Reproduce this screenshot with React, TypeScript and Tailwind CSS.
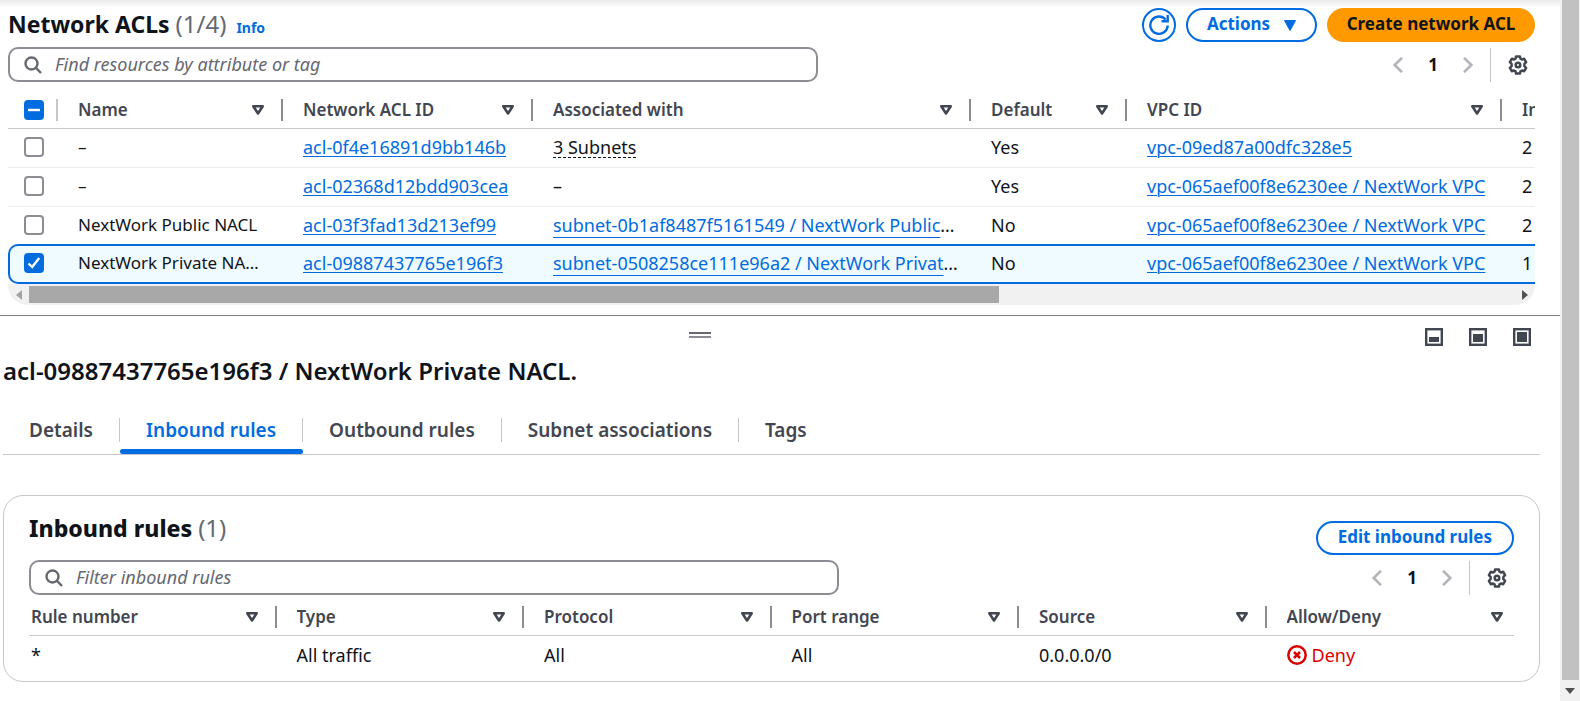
import React, { useState } from "react";

type IconProps = { className?: string };

const SearchIcon = ({ className = "" }: IconProps) => (
  <svg viewBox="0 0 18 18" className={className} fill="none" stroke="currentColor" strokeWidth="2.4" aria-hidden="true">
    <circle cx="7.500" cy="7.500" r="6" />
    <path d="M11.700 11.700 17 17" />
  </svg>
);

const GearIcon = () => (
  <svg viewBox="0 0 20 20" className="size-5" fill="none" stroke="currentColor" strokeWidth="2.5" strokeLinejoin="round" aria-hidden="true">
    <path d="M8.100 1.400h3.800l.6 2.300 1.400.8 2.300-.7 1.900 3.300-1.700 1.700v2.400l1.700 1.700-1.900 3.300-2.300-.7-1.400.8-.6 2.300H8.100l-.6-2.300-1.400-.8-2.300.7-1.900-3.300 1.700-1.700V8.800L1.900 7.100l1.900-3.300 2.300.7 1.400-.8z" />
    <circle cx="10" cy="10" r="2.300" />
  </svg>
);

const RefreshIcon = () => (
  <svg viewBox="0 0 20 20" className="size-5" fill="none" stroke="currentColor" strokeWidth="2.4" aria-hidden="true">
    <path d="M18.700 10.500A8.700 8.700 0 1 1 16.600 4.500" />
    <path d="M18.700 0v6.200H12.500" />
  </svg>
);

const Chevron = ({ flip }: { flip?: boolean }) => (
  <svg viewBox="0 0 10 16" className="h-4 w-[10px] text-[#b4b4bb]" fill="none" stroke="currentColor" strokeWidth="2.600" aria-hidden="true">
    <path d={flip ? "M1 .8 8.300 8 1 15.200" : "M9 .8 1.700 8 9 15.200"} />
  </svg>
);

const SortIcon = () => (
  <svg viewBox="0 0 12 10" className="h-[10px] w-3" fill="none" stroke="currentColor" strokeWidth="2.600" strokeLinejoin="round" aria-hidden="true">
    <path d="M1.300 1.300h9.400L6 8.500z" />
  </svg>
);

const DenyIcon = () => (
  <svg viewBox="0 0 20 20" className="size-5" fill="none" stroke="currentColor" strokeWidth="2.500" aria-hidden="true">
    <circle cx="10" cy="10" r="8.700" />
    <path d="m7 7 6 6M13 7l-6 6" />
  </svg>
);

const PanelIcon = ({ size }: { size: "small" | "medium" | "full" }) => (
  <svg viewBox="0 0 18 18" className="size-[18px]" aria-hidden="true">
    <rect x="1.200" y="1.200" width="15.600" height="15.600" fill="none" stroke="currentColor" strokeWidth="2.400" />
    {size === "small" && <rect x="4" y="9" width="10" height="5" fill="currentColor" />}
    {size === "medium" && <rect x="4" y="6" width="10" height="8" fill="currentColor" />}
    {size === "full" && <rect x="4" y="4" width="10" height="10" fill="currentColor" />}
  </svg>
);

function Checkbox({ label, checked, mixed, onChange }: { label: string; checked: boolean; mixed?: boolean; onChange: () => void }) {
  return (
    <label className="grid size-5 cursor-pointer place-items-center">
      <input
        type="checkbox"
        aria-label={label}
        checked={checked}
        onChange={onChange}
        className="col-start-1 row-start-1 size-5 appearance-none rounded-[4px] border-2 border-[#8c8c94] bg-white checked:border-[#006ce0] checked:bg-[#006ce0]"
      />
      {checked && (
        <svg viewBox="0 0 20 20" className="relative col-start-1 row-start-1 size-5" fill="none" stroke="#fff" strokeWidth="2.400" aria-hidden="true">
          {mixed ? <path d="M4 10h12" /> : <path d="m4.500 10.500 3.700 3.500 7-9" />}
        </svg>
      )}
    </label>
  );
}

function SearchBox({ id, label }: { id: string; label: string }) {
  return (
    <label
      htmlFor={id}
      className="flex h-[35px] w-full max-w-[810px] items-center gap-[13px] rounded-[10px] border-2 border-[#8c8c94] bg-white px-[14px]"
    >
      <SearchIcon className="size-[18px] shrink-0 text-[#656871]" />
      <input
        id={id}
        type="search"
        aria-label={label}
        placeholder={label}
        className="min-w-0 flex-1 bg-transparent pb-[2px] text-[18px] leading-6 outline-none placeholder:text-[#656871] placeholder:italic"
      />
    </label>
  );
}

function Pagination() {
  return (
    <div className="flex h-[34px] items-center text-[#424650]">
      <button type="button" aria-label="Previous page" className="px-1">
        <Chevron />
      </button>
      <button type="button" aria-label="Page 1" className="w-[52px] text-center text-[17px] font-bold leading-6 text-[#0f141a]">
        1
      </button>
      <button type="button" aria-label="Next page" className="px-1">
        <Chevron flip />
      </button>
      <span className="ml-[13px] h-[34px] w-px bg-[#c6c6cd]" />
      <button type="button" aria-label="Preferences" className="ml-[17px] mr-[7px]">
        <GearIcon />
      </button>
    </div>
  );
}

function HeaderCell({ children, last, first }: { children: React.ReactNode; last?: boolean; first?: boolean }) {
  return (
    <th scope="col" className="border-b border-[#c6c6cd] p-0 text-left font-semibold">
      <div className={`flex items-center ${first ? "pl-[2px]" : "pl-5"}`}>
        <span className="flex-1 overflow-hidden whitespace-nowrap">{children}</span>
        <button type="button" aria-label={`Sort by ${children}`} className={last ? "mr-[11px]" : "mr-[17px]"}>
          <SortIcon />
        </button>
        {!last && <span className="h-[22px] w-[2px] bg-[#8c8c94]" />}
      </div>
    </th>
  );
}

const outlined =
  "flex h-[34px] items-center justify-center rounded-full border-2 border-[#006ce0] bg-white text-[17px] font-bold leading-6 text-[#006ce0]";
const link = "text-[#006ce0] underline decoration-1 underline-offset-2";

type Acl = { name: string; id: string; subnets?: string; clipped?: string; isDefault: string; vpc: string; inbound: string };

const acls: Acl[] = [
  { name: "–", id: "acl-0f4e16891d9bb146b", subnets: "3 Subnets", isDefault: "Yes", vpc: "vpc-09ed87a00dfc328e5", inbound: "2" },
  { name: "–", id: "acl-02368d12bdd903cea", subnets: "–", isDefault: "Yes", vpc: "vpc-065aef00f8e6230ee / NextWork VPC", inbound: "2" },
  { name: "NextWork Public NACL", id: "acl-03f3fad13d213ef99", clipped: "subnet-0b1af8487f5161549 / NextWork Public", isDefault: "No", vpc: "vpc-065aef00f8e6230ee / NextWork VPC", inbound: "2" },
  { name: "NextWork Private NA…", id: "acl-09887437765e196f3", clipped: "subnet-0508258ce111e96a2 / NextWork Privat", isDefault: "No", vpc: "vpc-065aef00f8e6230ee / NextWork VPC", inbound: "1" },
];

const tabs = ["Details", "Inbound rules", "Outbound rules", "Subnet associations", "Tags"];
const ruleColumns = ["Rule number", "Type", "Protocol", "Port range", "Source", "Allow/Deny"];

function AclTable() {
  const [selected, setSelected] = useState(3);
  return (
    <div className="overflow-hidden">
      <table className="w-[1700px] table-fixed border-separate border-spacing-0 text-[18px] leading-6">
        <colgroup>
          <col className="w-[50px]" />
          <col className="w-[225px]" />
          <col className="w-[250px]" />
          <col className="w-[438px]" />
          <col className="w-[156px]" />
          <col className="w-[375px]" />
          <col />
        </colgroup>
        <thead className="text-[17px] text-[#424650]">
          <tr className="h-[39px] *:pt-[2px]">
            <th scope="col" className="border-b border-[#c6c6cd] p-0">
              <div className="flex items-center justify-between pl-4">
                <Checkbox label="Select all network ACLs" checked mixed onChange={() => setSelected(3)} />
                <span className="h-[22px] w-[2px] bg-[#c6c6cd]" />
              </div>
            </th>
            <HeaderCell>Name</HeaderCell>
            <HeaderCell>Network ACL ID</HeaderCell>
            <HeaderCell>Associated with</HeaderCell>
            <HeaderCell>Default</HeaderCell>
            <HeaderCell>VPC ID</HeaderCell>
            <HeaderCell last>Inbound</HeaderCell>
          </tr>
        </thead>
        <tbody className="whitespace-nowrap text-[#0f141a]">
          {acls.map((acl, i) => {
            const on = i === selected;
            const cell = on
              ? "border-y-2 border-[#006ce0] bg-[#f0fbff] pb-[2px] pl-5"
              : i + 1 === selected
                ? "pb-[2px] pl-5"
                : "border-b border-[#ebebf0] pb-[2px] pl-5";
            const lead = on
              ? "rounded-l-[10px] border-y-2 border-l-2 border-[#006ce0] bg-[#f0fbff] pb-[2px] pl-[14px]"
              : i + 1 === selected
                ? "pb-[2px] pl-4"
                : "border-b border-[#ebebf0] pb-[2px] pl-4";
            return (
              <tr key={acl.id} className={on ? "h-10" : i + 1 === selected ? "h-[37px]" : "h-[39px]"}>
                <td className={lead}>
                  <Checkbox label={`Select ${acl.id}`} checked={on} onChange={() => setSelected(i)} />
                </td>
                <td className={`${cell} text-[17px]`}>{acl.name}</td>
                <td className={cell}>
                  <a href={`#${acl.id}`} className={link}>{acl.id}</a>
                </td>
                <td className={cell}>
                  {acl.clipped ? (
                    <>
                      <a href="#subnet" className="underline decoration-1 underline-offset-[5px] text-[#006ce0]">{acl.clipped}</a>…
                    </>
                  ) : acl.subnets === "–" ? (
                    "–"
                  ) : (
                    <button type="button" className="border-b border-dashed border-[#0f141a] leading-5">{acl.subnets}</button>
                  )}
                </td>
                <td className={cell}>{acl.isDefault}</td>
                <td className={cell}>
                  <a href="#vpc" className={link}>{acl.vpc}</a>
                </td>
                <td className={cell}>{acl.inbound}</td>
              </tr>
            );
          })}
        </tbody>
      </table>
      <div className="flex h-[21px] items-center overflow-hidden rounded-b-[20px] bg-[#f1f1f1]" aria-hidden="true">
        <div className="flex w-[21px] justify-center">
          <svg viewBox="0 0 6 10" className="h-[10px] w-[6px]"><path d="M6 0v10L0 5z" fill="#a3a3a3" /></svg>
        </div>
        <div className="flex-1">
          <div className="h-[17px] w-[65.3%] bg-[#a8a8a8]" />
        </div>
        <div className="flex w-[21px] justify-center">
          <svg viewBox="0 0 6 10" className="h-[10px] w-[6px]"><path d="M0 0v10l6-5z" fill="#505050" /></svg>
        </div>
      </div>
    </div>
  );
}

function RulesCard() {
  return (
    <section className="rounded-[20px] border border-[#c6c6cd] px-[25px] pt-4 pb-2">
      <div className="flex items-start justify-between">
        <h3 className="text-[23px] font-extrabold leading-8 text-[#0f141a]">
          Inbound rules <span className="text-[24px] font-normal text-[#656871]">(1)</span>
        </h3>
        <button type="button" className={`${outlined} mt-[9px] px-5 pb-[2px]`}>Edit inbound rules</button>
      </div>
      <div className="mt-[5px] flex items-center justify-between">
        <SearchBox id="rule-filter" label="Filter inbound rules" />
        <Pagination />
      </div>
      <table className="mt-1 w-full table-fixed border-separate border-spacing-0 text-[18px] leading-6">
        <thead className="text-[17px] text-[#424650]">
          <tr className="h-[37px]">
            {ruleColumns.map((name, i) => (
              <HeaderCell key={name} first={i === 0} last={i === 5}>{name}</HeaderCell>
            ))}
          </tr>
        </thead>
        <tbody className="text-[#0f141a]">
          <tr className="h-[37px]">
            <td className="p-0 pl-[2px]">*</td>
            <td className="p-0 pl-5">All traffic</td>
            <td className="p-0 pl-5">All</td>
            <td className="p-0 pl-5">All</td>
            <td className="p-0 pl-5">0.0.0.0/0</td>
            <td className="p-0 pl-5">
              <span className="flex items-center gap-[5px] text-[#db0000]">
                <DenyIcon />
                Deny
              </span>
            </td>
          </tr>
        </tbody>
      </table>
    </section>
  );
}

export default function App() {
  return (
    <div className="flex min-h-screen bg-white font-['Noto_Sans',sans-serif] text-[#0f141a]">
      <main className="min-w-0 flex-1">
        <div className="h-2 bg-linear-to-b from-[#ebebeb] to-white" />
        <section className="pr-[25px] pl-2">
          <header className="flex items-start justify-between">
            <h1 className="flex items-baseline gap-[10px] text-[23px] font-bold leading-8">
              <span>
                Network ACLs <span className="text-[24px] font-normal text-[#656871]">(1/4)</span>
              </span>
              <a href="#info" className="text-[14px] leading-5 text-[#006ce0]">Info</a>
            </h1>
            <div className="flex gap-[10px]">
              <button type="button" aria-label="Refresh" className={`${outlined} w-[34px]`}>
                <RefreshIcon />
              </button>
              <button type="button" className={`${outlined} w-[131px] gap-[14px] pb-[2px]`}>
                Actions
                <svg viewBox="0 0 12 11" className="mt-[2px] h-[11px] w-3" aria-hidden="true">
                  <path d="M.500.500h11L6 10.500z" fill="currentColor" stroke="currentColor" strokeLinejoin="round" />
                </svg>
              </button>
              <button type="button" className="h-[34px] w-[208px] rounded-full bg-[#ff9900] pb-[2px] text-[17px] font-bold leading-6 text-[#0f141a]">
                Create network ACL
              </button>
            </div>
          </header>
          <div className="mt-[5px] mb-2 flex items-center justify-between">
            <SearchBox id="acl-filter" label="Find resources by attribute or tag" />
            <Pagination />
          </div>
          <AclTable />
        </section>

        <section className="mt-[10px] border-t border-[#7d8087]">
          <div className="flex pt-3">
            <div className="flex-1">
              <button type="button" aria-label="Resize panel" className="mx-auto mt-1 flex h-[6px] w-[22px] flex-col justify-between">
                <span className="h-[2px] w-full bg-[#656871]" />
                <span className="h-[2px] w-full bg-[#8c8c94]" />
              </button>
            </div>
            <div className="flex w-40 justify-end gap-[26px] pr-[29px] text-[#424650]">
              <button type="button" aria-label="Small panel"><PanelIcon size="small" /></button>
              <button type="button" aria-label="Medium panel"><PanelIcon size="medium" /></button>
              <button type="button" aria-label="Full panel"><PanelIcon size="full" /></button>
            </div>
          </div>
          <div className="pr-5 pl-[3px]">
            <h2 className="mt-[9px] text-[24px] font-semibold leading-8">acl-09887437765e196f3 / NextWork Private NACL.</h2>
            <div role="tablist" className="mt-[25px] flex h-[43px] border-b border-[#c6c6cd] text-[19px] font-semibold leading-6 text-[#424650]">
              {tabs.map((tab) => {
                const active = tab === "Inbound rules";
                return (
                  <button
                    key={tab}
                    type="button"
                    role="tab"
                    aria-selected={active}
                    className={`flex flex-col justify-between ${active ? "text-[#006ce0]" : ""}`}
                  >
                    <span className={`mt-[6px] w-full px-[26px] ${tab === "Tags" ? "" : "border-r border-[#c6c6cd]"}`}>{tab}</span>
                    {active && <span className="h-[5px] w-full rounded-full bg-[#006ce0]" />}
                  </button>
                );
              })}
            </div>
            <div className="mt-10">
              <RulesCard />
            </div>
          </div>
        </section>
      </main>

      <div className="flex w-5 shrink-0 flex-col bg-[#f1f1f1]" aria-hidden="true">
        <div className="mr-px ml-[2px] flex-1 bg-[#c1c1c1]" />
        <div className="flex h-[21px] items-center justify-center">
          <svg viewBox="0 0 10 6" className="h-[6px] w-[10px]"><path d="M0 0h10L5 6z" fill="#505050" /></svg>
        </div>
      </div>
    </div>
  );
}
